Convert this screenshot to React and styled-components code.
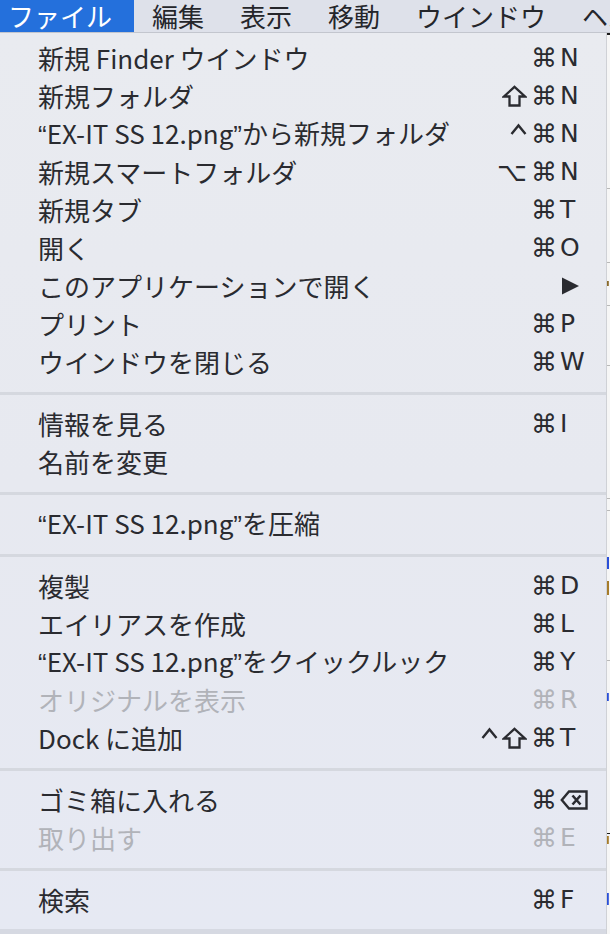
import React from 'react';
import styled, { createGlobalStyle } from 'styled-components';

const GlobalStyle = createGlobalStyle`
  html, body { margin: 0; padding: 0; }
  body {
    background: #d6d9e2;
    font-family: "Noto Sans CJK JP", "Noto Sans", sans-serif;
  }
`;

const Screen = styled.div`
  width: 610px;
  height: 934px;
  overflow: hidden;
  display: flex;
  flex-direction: column;
  background: #d6d9e2;
`;

const MenuBar = styled.div`
  height: 32px;
  flex: none;
  display: flex;
  align-items: stretch;
  background: #dee1ea;
  border-bottom: 1px solid #c3c6ce;
  white-space: nowrap;
`;

const MenuTitle = styled.div`
  flex: none;
  display: flex;
  align-items: center;
  padding: ${p => (p.$first ? '0 22px 0 8px' : '0 18px')};
  font-size: 26px;
  line-height: 32px;
  color: ${p => (p.$active ? '#ffffff' : '#25262b')};
  background: ${p => (p.$active ? '#2470dc' : 'transparent')};
`;

const Body = styled.div`
  flex: 1;
  display: flex;
  align-items: flex-start;
`;

const Menu = styled.div`
  width: 606px;
  flex: none;
  display: flex;
  flex-direction: column;
  padding: 6px 0 10px;
  background: linear-gradient(180deg, #e9ebf0 0%, #e7e9f0 50%, #e6e9f3 100%);
`;

const Behind = styled.div`
  flex: 1;
  align-self: stretch;
  border-left: 1px solid #cfd1d6;
  background:
    linear-gradient(#1a1a1a, #1a1a1a) 0 0 / 100% 2px no-repeat,
    linear-gradient(#b9b9b9, #b9b9b9) 0 155px / 100% 1px no-repeat,
    linear-gradient(#b9b9b9, #b9b9b9) 0 229px / 100% 1px no-repeat,
    linear-gradient(#8a6a2a, #8a6a2a) 0 248px / 60% 5px no-repeat,
    linear-gradient(#b9b9b9, #b9b9b9) 0 272px / 100% 1px no-repeat,
    linear-gradient(#b9b9b9, #b9b9b9) 0 332px / 100% 1px no-repeat,
    linear-gradient(#b9b9b9, #b9b9b9) 0 465px / 100% 1px no-repeat,
    linear-gradient(#b9b9b9, #b9b9b9) 0 477px / 100% 1px no-repeat,
    linear-gradient(#2a4fd8, #2a4fd8) 0 524px / 70% 12px no-repeat,
    linear-gradient(#a67c2a, #a67c2a) 0 548px / 70% 14px no-repeat,
    linear-gradient(#b9b9b9, #b9b9b9) 0 627px / 100% 1px no-repeat,
    linear-gradient(#2a4fd8, #2a4fd8) 0 660px / 60% 8px no-repeat,
    linear-gradient(#1a1a1a, #1a1a1a) 0 800px / 100% 1px no-repeat,
    linear-gradient(#a67c2a, #a67c2a) 0 803px / 60% 8px no-repeat,
    linear-gradient(#2a4fd8, #2a4fd8) 0 860px / 60% 12px no-repeat,
    #f6f6f6;
`;

const Item = styled.div`
  height: 38px;
  flex: none;
  display: flex;
  align-items: center;
  padding: 0 15px 0 38px;
  font-size: 26px;
  line-height: 1;
  white-space: nowrap;
  color: ${p => (p.$disabled ? '#b1b3b9' : '#2a2b30')};
`;

const Label = styled.span`
  flex: 1;
  min-width: 0;
`;

const Quote = styled.span`
  font-family: "Liberation Sans", sans-serif;
`;

const Shortcut = styled.span`
  display: flex;
  align-items: center;
  flex: none;
  height: 24px;
`;

const Mods = styled.span`
  display: flex;
  align-items: center;
  gap: 4px;
  height: 24px;
  padding-right: 2px;
`;

const ModChar = styled.span`
  font-family: "DejaVu Sans", sans-serif;
  font-size: 26px;
  line-height: 24px;
`;

const ModIcon = styled.svg`
  display: block;
  align-self: ${p => (p.$top ? 'flex-start' : 'center')};
  margin-top: ${p => (p.$top ? '1px' : '0')};
`;

const Key = styled.span`
  width: 31px;
  display: flex;
  align-items: center;
  padding-left: 1px;
  font-family: "DejaVu Sans", sans-serif;
  font-size: 25px;
  line-height: 24px;
`;

const Separator = styled.div`
  height: 24px;
  flex: none;
  display: flex;
  align-items: center;
  &::before {
    content: "";
    display: block;
    width: 100%;
    height: 3px;
    background: #d5d8df;
  }
`;

const ShiftIcon = () => (
  <ModIcon width="25" height="22" viewBox="0 0 25 22" fill="none" stroke="currentColor" strokeWidth="2.3" strokeLinejoin="miter">
    <path d="M12.5 1.8 L23 11.5 H17.5 V20.5 H7.5 V11.5 H2 Z" />
  </ModIcon>
);

const CtrlIcon = () => (
  <ModIcon $top width="17" height="12" viewBox="0 0 17 12" fill="none" stroke="currentColor" strokeWidth="2.4" strokeLinejoin="miter">
    <path d="M1.5 11 L8.5 2.5 L15.5 11" />
  </ModIcon>
);

const DeleteIcon = () => (
  <svg width="28" height="20" viewBox="0 0 28 20" fill="none" stroke="currentColor" strokeWidth="2.4" strokeLinejoin="miter">
    <path d="M9 1.5 H26.5 V18.5 H9 L1.8 10 Z" />
    <path d="M12.5 5.5 L20.5 14.5 M20.5 5.5 L12.5 14.5" strokeWidth="2.6" />
  </svg>
);

const SubArrow = () => (
  <svg width="20" height="18" viewBox="0 0 20 18">
    <path d="M2 0.5 L19 9 L2 17.5 Z" fill="currentColor" />
  </svg>
);

const renderMod = (m, i) => {
  if (m === '⇧') return <ShiftIcon key={i} />;
  if (m === '⌃') return <CtrlIcon key={i} />;
  return <ModChar key={i}>{m}</ModChar>;
};

const renderLabel = text =>
  text.split(/([“”])/).map((part, i) =>
    part === '“' || part === '”' ? <Quote key={i}>{part}</Quote> : <React.Fragment key={i}>{part}</React.Fragment>
  );

const sections = [
  [
    { label: '新規 Finder ウインドウ', mods: '⌘', key: 'N' },
    { label: '新規フォルダ', mods: '⇧⌘', key: 'N' },
    { label: '“EX-IT SS 12.png”から新規フォルダ', mods: '⌃⌘', key: 'N' },
    { label: '新規スマートフォルダ', mods: '⌥⌘', key: 'N' },
    { label: '新規タブ', mods: '⌘', key: 'T' },
    { label: '開く', mods: '⌘', key: 'O' },
    { label: 'このアプリケーションで開く', submenu: true },
    { label: 'プリント', mods: '⌘', key: 'P' },
    { label: 'ウインドウを閉じる', mods: '⌘', key: 'W' },
  ],
  [
    { label: '情報を見る', mods: '⌘', key: 'I' },
    { label: '名前を変更' },
  ],
  [{ label: '“EX-IT SS 12.png”を圧縮' }],
  [
    { label: '複製', mods: '⌘', key: 'D' },
    { label: 'エイリアスを作成', mods: '⌘', key: 'L' },
    { label: '“EX-IT SS 12.png”をクイックルック', mods: '⌘', key: 'Y' },
    { label: 'オリジナルを表示', mods: '⌘', key: 'R', disabled: true },
    { label: 'Dock に追加', mods: '⌃⇧⌘', key: 'T' },
  ],
  [
    { label: 'ゴミ箱に入れる', mods: '⌘', key: 'delete' },
    { label: '取り出す', mods: '⌘', key: 'E', disabled: true },
  ],
  [{ label: '検索', mods: '⌘', key: 'F' }],
];

const titles = ['ファイル', '編集', '表示', '移動', 'ウインドウ', 'ヘルプ'];

export default function App() {
  return (
    <>
      <GlobalStyle />
      <Screen>
        <MenuBar>
          {titles.map((t, i) => (
            <MenuTitle key={t} $first={i === 0} $active={i === 0}>
              {t}
            </MenuTitle>
          ))}
        </MenuBar>
        <Body>
          <Menu>
            {sections.map((items, si) => (
              <React.Fragment key={si}>
                {si > 0 && <Separator />}
                {items.map(it => (
                  <Item key={it.label} $disabled={it.disabled}>
                    <Label>{renderLabel(it.label)}</Label>
                    {(it.mods || it.submenu) && (
                      <Shortcut>
                        <Mods>{it.mods ? [...it.mods].map(renderMod) : null}</Mods>
                        <Key>
                          {it.submenu ? <SubArrow /> : it.key === 'delete' ? <DeleteIcon /> : it.key}
                        </Key>
                      </Shortcut>
                    )}
                  </Item>
                ))}
              </React.Fragment>
            ))}
          </Menu>
          <Behind />
        </Body>
      </Screen>
    </>
  );
}
